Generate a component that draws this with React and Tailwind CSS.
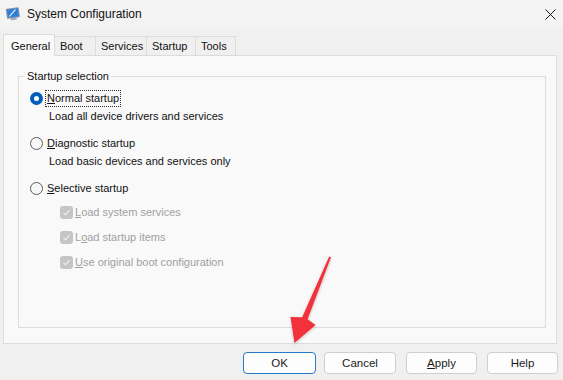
function AppIcon() {
  return (
    <svg width="16" height="16" viewBox="0 0 16 16">
      <g transform="rotate(-8 8 8)">
        <rect x="1.5" y="2" width="13" height="10" rx="1" fill="#8a96a8" />
        <rect x="2.5" y="3" width="11" height="8" fill="#2f7fd8" />
        <path d="M4 10 L11 4" stroke="#ffffff" strokeWidth="1" />
        <rect x="5" y="12" width="6" height="2" fill="#9aa3ae" />
      </g>
    </svg>
  );
}

function CloseIcon() {
  return (
    <svg width="11" height="11" viewBox="0 0 11 11" className="ml-auto">
      <path d="M0.5 0.5 L10.5 10.5 M10.5 0.5 L0.5 10.5" stroke="#1a1a1a" strokeWidth="1" />
    </svg>
  );
}

function Radio({ checked }) {
  if (checked) {
    return (
      <span className="w-[13px] h-[13px] rounded-full bg-[#005fb8] flex items-center justify-center shrink-0">
        <span className="w-[5px] h-[5px] rounded-full bg-white" />
      </span>
    );
  }
  return <span className="w-[13px] h-[13px] rounded-full border border-[#5d5d5d] bg-[#f7f7f7] shrink-0" />;
}

function DisabledCheck() {
  return (
    <span className="w-[13px] h-[13px] rounded-[3px] bg-[#c5c5c5] flex items-center justify-center shrink-0">
      <svg width="9" height="9" viewBox="0 0 9 9">
        <path d="M1.5 4.8 L3.6 6.8 L7.6 2.2" fill="none" stroke="#f5f5f5" strokeWidth="1.1" />
      </svg>
    </span>
  );
}

function Tab({ label, active, w }) {
  if (active) {
    return (
      <div className="h-[22px] w-[52px] -mb-px bg-[#f9f9f9] border border-b-0 border-[#dcdcdc] flex items-center pl-[7px] relative z-10">
        {label}
      </div>
    );
  }
  return (
    <div className={'h-[19px] border border-l-0 border-b-0 border-[#dcdcdc] bg-[#f0f0f0] flex items-center pl-[5px] ' + w}>
      {label}
    </div>
  );
}

function Button({ children, primary, w }) {
  return (
    <button
      className={
        primary
          ? 'h-[22px] w-[73px] rounded-[4px] border border-[#2a79c6] bg-[#fdfdfd] text-[#1a1a1a] text-[11.5px]'
          : 'h-[22px] rounded-[4px] border border-[#cfcfcf] bg-[#fdfdfd] text-[#1a1a1a] text-[11.5px] ' + w
      }
    >
      {children}
    </button>
  );
}

export default function App() {
  return (
    <div className="w-[563px] h-[380px] bg-[#f0f0f0] relative overflow-hidden text-[11px] leading-[18px] text-[#111] font-['Liberation_Sans',Arial,sans-serif]">
      {/* title bar */}
      <div className="h-[28px] bg-[#f3f3f3] flex items-center pl-[5px] pr-[7px]">
        <AppIcon />
        <span className="ml-[6px] text-[12px]">System Configuration</span>
        <CloseIcon />
      </div>

      <div className="pl-[3px] pr-[6px] pt-[6px]">
        {/* tabs */}
        <div className="flex items-end">
          <Tab label="General" active />
          <Tab label="Boot" w="w-[41px]" />
          <Tab label="Services" w="w-[51px]" />
          <Tab label="Startup" w="w-[49px]" />
          <Tab label="Tools" w="w-[40px]" />
        </div>

        {/* panel */}
        <div className="h-[289px] border border-[#dcdcdc] bg-[#f9f9f9] pl-[14px] pr-[10px] pt-[12px]">
          <fieldset className="h-[260px] border border-[#dcdcdc] pl-[11px]">
            <legend className="ml-[-5px] px-[2px] leading-[16px]">Startup selection</legend>
            <div className="pt-[5px] flex flex-col">
              <div className="h-[18px] flex items-center gap-[3px]">
                <Radio checked />
                <span className="outline-1 outline-dotted outline-[#333] px-px leading-[15px]">
                  <u>N</u>ormal startup
                </span>
              </div>
              <div className="pl-[19px]">Load all device drivers and services</div>

              <div className="h-[18px] flex items-center gap-[3px] mt-[9px]">
                <Radio />
                <span className="px-px">
                  <u>D</u>iagnostic startup
                </span>
              </div>
              <div className="pl-[19px]">Load basic devices and services only</div>

              <div className="h-[18px] flex items-center gap-[3px] mt-[9px]">
                <Radio />
                <span className="px-px">
                  <u>S</u>elective startup
                </span>
              </div>

              <div className="pl-[30px] flex flex-col gap-[7px] mt-[6px] text-[#a0a0a0]">
                <div className="h-[18px] flex items-center gap-[2px]">
                  <DisabledCheck />
                  <span>
                    <u>L</u>oad system services
                  </span>
                </div>
                <div className="h-[18px] flex items-center gap-[2px]">
                  <DisabledCheck />
                  <span>
                    L<u>o</u>ad startup items
                  </span>
                </div>
                <div className="h-[18px] flex items-center gap-[2px]">
                  <DisabledCheck />
                  <span>
                    <u>U</u>se original boot configuration
                  </span>
                </div>
              </div>
            </div>
          </fieldset>
        </div>

        {/* buttons */}
        <div className="flex justify-end mt-[8px] mr-[-1px]">
          <Button primary>OK</Button>
          <span className="w-[8px]" />
          <Button w="w-[72px]">Cancel</Button>
          <span className="w-[10px]" />
          <Button w="w-[71px]">
            <u>A</u>pply
          </Button>
          <span className="w-[10px]" />
          <Button w="w-[71px]">Help</Button>
        </div>
      </div>

      {/* red annotation arrow */}
      <svg className="absolute inset-0 pointer-events-none" width="563" height="380">
        <defs>
          <filter id="sh" x="-50%" y="-50%" width="200%" height="200%">
            <feDropShadow dx="0" dy="1" stdDeviation="1.5" floodColor="#000" floodOpacity="0.25" />
          </filter>
        </defs>
        <polygon
          points="329.2,256.6 331,257.3 307.6,319.3 315.5,325 294.5,343 290.5,317 302.2,317.2"
          fill="#f2303a"
          filter="url(#sh)"
        />
      </svg>
    </div>
  );
}
